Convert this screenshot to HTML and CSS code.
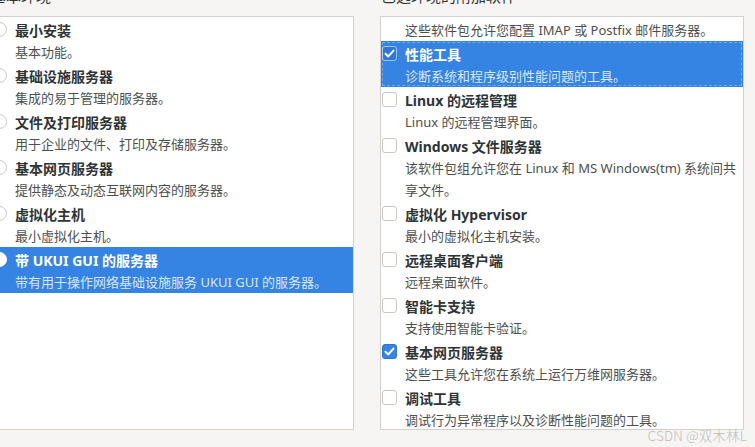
FILE: index.html
```html
<!DOCTYPE html>
<html lang="zh-CN">
<head>
    <meta charset="UTF-8">
    <title>软件选择</title>
    <link rel="stylesheet" href="styles.css">
</head>
<body>
    <div class="page">
        <div class="column column-left">
            <h3 class="heading">基本环境</h3>
            <div class="panel">
                <ul class="list">
                    <li class="row">
                        <span class="radio"></span>
                        <div class="text">
                            <p class="title">最小安装</p>
                            <p class="desc">基本功能。</p>
                        </div>
                    </li>
                    <li class="row">
                        <span class="radio"></span>
                        <div class="text">
                            <p class="title">基础设施服务器</p>
                            <p class="desc">集成的易于管理的服务器。</p>
                        </div>
                    </li>
                    <li class="row">
                        <span class="radio"></span>
                        <div class="text">
                            <p class="title">文件及打印服务器</p>
                            <p class="desc">用于企业的文件、打印及存储服务器。</p>
                        </div>
                    </li>
                    <li class="row">
                        <span class="radio"></span>
                        <div class="text">
                            <p class="title">基本网页服务器</p>
                            <p class="desc">提供静态及动态互联网内容的服务器。</p>
                        </div>
                    </li>
                    <li class="row">
                        <span class="radio"></span>
                        <div class="text">
                            <p class="title">虚拟化主机</p>
                            <p class="desc">最小虚拟化主机。</p>
                        </div>
                    </li>
                    <li class="row selected">
                        <span class="radio checked"></span>
                        <div class="text">
                            <p class="title">带 UKUI GUI 的服务器</p>
                            <p class="desc">带有用于操作网络基础设施服务 UKUI GUI 的服务器。</p>
                        </div>
                    </li>
                </ul>
            </div>
        </div>

        <div class="column column-right">
            <h3 class="heading">已选环境的附加软件</h3>
            <div class="panel">
                <ul class="list">
                    <!-- list is scrolled: only the tail of the mail server row shows -->
                    <li class="row partial">
                        <span class="spacer"></span>
                        <div class="text">
                            <p class="desc">这些软件包允许您配置 IMAP 或 Postfix 邮件服务器。</p>
                        </div>
                    </li>
                    <li class="row selected focused">
                        <span class="check checked">
                            <svg viewBox="0 0 15 15" width="15" height="15"><path d="M3.5 7.8 L6.3 10.4 L11.5 4.6" fill="none" stroke="#fff" stroke-width="2" stroke-linecap="round" stroke-linejoin="round"/></svg>
                        </span>
                        <div class="text">
                            <p class="title">性能工具</p>
                            <p class="desc">诊断系统和程序级别性能问题的工具。</p>
                        </div>
                    </li>
                    <li class="row">
                        <span class="check"></span>
                        <div class="text">
                            <p class="title">Linux 的远程管理</p>
                            <p class="desc">Linux 的远程管理界面。</p>
                        </div>
                    </li>
                    <li class="row">
                        <span class="check"></span>
                        <div class="text">
                            <p class="title">Windows 文件服务器</p>
                            <p class="desc">该软件包组允许您在 Linux 和 MS Windows(tm) 系统间共享文件。</p>
                        </div>
                    </li>
                    <li class="row">
                        <span class="check"></span>
                        <div class="text">
                            <p class="title">虚拟化 Hypervisor</p>
                            <p class="desc">最小的虚拟化主机安装。</p>
                        </div>
                    </li>
                    <li class="row">
                        <span class="check"></span>
                        <div class="text">
                            <p class="title">远程桌面客户端</p>
                            <p class="desc">远程桌面软件。</p>
                        </div>
                    </li>
                    <li class="row">
                        <span class="check"></span>
                        <div class="text">
                            <p class="title">智能卡支持</p>
                            <p class="desc">支持使用智能卡验证。</p>
                        </div>
                    </li>
                    <li class="row">
                        <span class="check checked">
                            <svg viewBox="0 0 15 15" width="15" height="15"><path d="M3.5 7.8 L6.3 10.4 L11.5 4.6" fill="none" stroke="#fff" stroke-width="2" stroke-linecap="round" stroke-linejoin="round"/></svg>
                        </span>
                        <div class="text">
                            <p class="title">基本网页服务器</p>
                            <p class="desc">这些工具允许您在系统上运行万维网服务器。</p>
                        </div>
                    </li>
                    <li class="row">
                        <span class="check"></span>
                        <div class="text">
                            <p class="title">调试工具</p>
                            <p class="desc">调试行为异常程序以及诊断性能问题的工具。</p>
                        </div>
                    </li>
                </ul>
            </div>
        </div>
    </div>
    <div class="watermark">CSDN @双木林L</div>
</body>
</html>
```

FILE: styles.css
```css
html, body{
    margin: 0;
    height: 100%;
}
body{
    background-color: #f6f5f4;
    color: #2e3436;
    font-family: "Noto Sans", "Noto Sans CJK SC", sans-serif;
    overflow: hidden;
    position: relative;
}
.page{
    display: flex;
    gap: 26px;
    margin: -14px 0 0 -10px;
}
.column{
    width: 364px;
    flex: none;
}
.heading{
    margin: 0 0 10px;
    padding-left: 1px;
    font-size: 15px;
    font-weight: normal;
    line-height: 20px;
}
.panel{
    box-sizing: border-box;
    height: 414px;
    background-color: #fff;
    border: 1px solid #d5d0cc;
    overflow: hidden;
}
.list{
    list-style: none;
    margin: 0;
    padding: 0;
}
.row{
    display: flex;
    align-items: flex-start;
    gap: 8px;
    padding: 4px 0 0 1px;
}
.row.partial{
    padding-top: 2px;
}
.row p{
    margin: 0;
}
.title{
    font-size: 14px;
    font-weight: bold;
    line-height: 20px;
}
.desc{
    font-size: 13px;
    line-height: 22px;
    color: #4d4f4f;
}
.row.selected{
    background-color: #3584e4;
    color: #fff;
}
.row.selected .desc{
    color: rgba(255, 255, 255, 0.82);
}
.row.focused{
    outline: 1px dashed rgba(255, 255, 255, 0.3);
    outline-offset: -2px;
}
.spacer{
    flex: none;
    width: 15px;
}
.radio, .check{
    flex: none;
    box-sizing: border-box;
    width: 15px;
    height: 15px;
    margin-top: 1px;
    background-color: #fff;
    border: 1px solid #cdc7c2;
}
.radio{
    border-radius: 50%;
}
.radio.checked{
    border-color: #fff;
    box-shadow: inset 0 0 0 3px #fff;
    background-color: #fff;
}
.check{
    border-radius: 3px;
}
.check svg{
    display: block;
    margin: -1px;
}
.check.checked{
    background-color: #3584e4;
    border-color: #2a76d4;
}
.row.selected .check.checked{
    background-color: #2c78d8;
    border-color: #9cc3f2;
}
.watermark{
    position: absolute;
    right: 8px;
    bottom: 2px;
    font-size: 13.5px;
    color: #bdbdbd;
    font-family: "Noto Sans CJK SC", sans-serif;
    font-weight: 300;
    letter-spacing: 0.2px;
}
```
